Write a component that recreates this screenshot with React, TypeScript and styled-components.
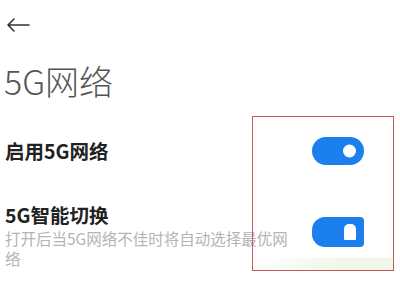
import React from "react";
import styled, { createGlobalStyle } from "styled-components";

const Global = createGlobalStyle`
  html, body { margin: 0; padding: 0; background: #fff; }
  body { width: 400px; height: 284px; overflow: hidden; font-family: "Noto Sans CJK SC", "Noto Sans", sans-serif; }
`;

const Page = styled.div`
  position: relative;
  width: 400px;
  height: 284px;
  display: flex;
  flex-direction: column;
  padding-left: 5px;
  box-sizing: border-box;
`;

const TopBar = styled.div`
  height: 50px;
  display: flex;
  align-items: center;
  padding-left: 1px;
`;

const Title = styled.h1`
  margin: 11px 0 0 -1px;
  font-size: 34px;
  line-height: 40px;
  font-weight: 300;
  color: #555;
`;

const List = styled.div`
  display: flex;
  flex-direction: column;
  margin-top: 37px;
`;

const Row = styled.div<{ $h: number }>`
  display: flex;
  align-items: flex-start;
  justify-content: space-between;
  height: ${(p) => p.$h}px;
  padding-right: 36px;
`;

const TextCol = styled.div`
  display: flex;
  flex-direction: column;
  width: 286px;
`;

const RowTitle = styled.div`
  font-size: 19.5px;
  line-height: 26px;
  font-weight: 700;
  color: #222;
`;

const RowSub = styled.div`
  font-size: 15.5px;
  line-height: 20px;
  color: #b4b4b4;
`;

const Track = styled.div<{ $blur?: boolean; $top: number }>`
  position: relative;
  margin-top: ${(p) => p.$top}px;
  width: 52px;
  height: 28px;
  border-radius: 14px;
  background: #1b80ee;
  flex-shrink: 0;
  ${(p) => (p.$blur ? "filter: blur(0.6px); border-radius: 13px 4px 4px 13px; height: 30px;" : "")}
`;

const Knob = styled.div<{ $square?: boolean }>`
  position: absolute;
  right: 8px;
  top: 50%;
  transform: translateY(-50%);
  width: ${(p) => (p.$square ? 12 : 13)}px;
  height: ${(p) => (p.$square ? 16 : 13)}px;
  border-radius: ${(p) => (p.$square ? "5px 5px 1px 1px" : "50%")};
  background: #fff;
`;

const Annotation = styled.div`
  position: absolute;
  left: 252px;
  top: 116px;
  width: 142px;
  height: 155px;
  border: 1.5px solid #c45a5e;
  box-sizing: border-box;
  pointer-events: none;
`;

const Tint = styled.div`
  position: absolute;
  left: 253px;
  top: 258px;
  width: 140px;
  height: 12px;
  background: linear-gradient(90deg, rgba(240, 248, 232, 0) 0%, rgba(238, 248, 228, 0.9) 60%);
`;

const Arrow = () => (
  <svg width="24" height="14" viewBox="0 0 24 14" fill="none">
    <path d="M23 7H2M8 1L2 7l6 6" stroke="#333" strokeWidth="1.6" strokeLinecap="round" strokeLinejoin="round" />
  </svg>
);

export default function App() {
  return (
    <>
      <Global />
      <Page>
        <TopBar>
          <Arrow />
        </TopBar>
        <Title>5G网络</Title>
        <List>
          <Row $h={64}>
            <RowTitle>启用5G网络</RowTitle>
            <Track $top={-1}>
              <Knob />
            </Track>
          </Row>
          <Row $h={70}>
            <TextCol>
              <RowTitle>5G智能切换</RowTitle>
              <RowSub>打开后当5G网络不佳时将自动选择最优网络</RowSub>
            </TextCol>
            <Track $blur $top={15}>
              <Knob $square />
            </Track>
          </Row>
        </List>
        <Tint />
        <Annotation />
      </Page>
    </>
  );
}
